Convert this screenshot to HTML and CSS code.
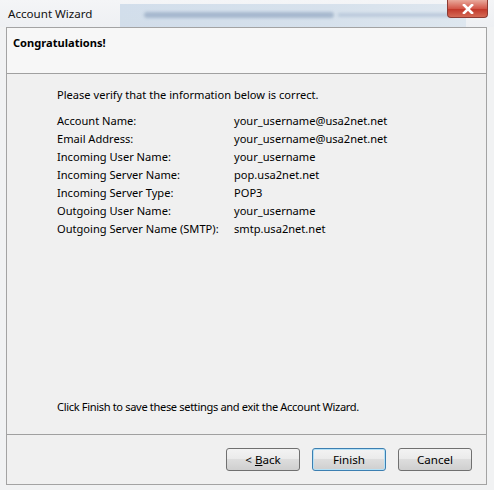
FILE: index.html
```html
<!DOCTYPE html>
<html lang="en">
  <head>
    <meta charset="UTF-8" />
    <title>Account Wizard</title>
    <link rel="stylesheet" href="styles.css">
  </head>
  <body>
    <div class="titlebar">
      <span class="title">Account Wizard</span>
      <div class="blur"></div>
      <div class="close">
        <svg width="16" height="10" viewBox="0 0 16 10">
          <path d="M4 1 L12 9 M12 1 L4 9" stroke="#fff" stroke-width="2.6" stroke-linecap="square" />
        </svg>
      </div>
    </div>
    <div class="frame">
      <div class="header">Congratulations!</div>
      <div class="content">
        <p class="intro">Please verify that the information below is correct.</p>
        <div class="row"><span class="label">Account Name:</span><span>your_username@usa2net.net</span></div>
        <div class="row"><span class="label">Email Address:</span><span>your_username@usa2net.net</span></div>
        <div class="row"><span class="label">Incoming User Name:</span><span>your_username</span></div>
        <div class="row"><span class="label">Incoming Server Name:</span><span>pop.usa2net.net</span></div>
        <div class="row"><span class="label">Incoming Server Type:</span><span>POP3</span></div>
        <div class="row"><span class="label">Outgoing User Name:</span><span>your_username</span></div>
        <div class="row"><span class="label">Outgoing Server Name (SMTP):</span><span>smtp.usa2net.net</span></div>
        <p class="outro">Click Finish to save these settings and exit the Account Wizard.</p>
      </div>
      <div class="footer">
        <button>&lt; <u>B</u>ack</button>
        <button class="default">Finish</button>
        <button>Cancel</button>
      </div>
    </div>
  </body>
</html>
```

FILE: styles.css
```css
* {
  box-sizing: border-box;
}
body {
  margin: 0;
  width: 494px;
  height: 490px;
  background: #f1f2f3;
  font-family: "Noto Sans", "Open Sans", sans-serif;
  font-size: 11.1px;
  color: #000;
}
.titlebar {
  position: relative;
  height: 27px;
  display: flex;
  align-items: center;
  padding-left: 8px;
  background: linear-gradient(#f4f5f7, #eef0f3);
}
.title {
  font-size: 11.6px;
  color: #111;
  margin-top: -1px;
}
.blur {
  position: absolute;
  left: 120px;
  right: 28px;
  top: 4px;
  height: 23px;
  background: linear-gradient(90deg, #cfdcea, #d4e0ec 60%, #dde6ef);
  opacity: 0.9;
}
.blur::before {
  content: "";
  position: absolute;
  left: 24px;
  top: 8px;
  width: 190px;
  height: 6px;
  border-radius: 3px;
  background: #9fb2ca;
  filter: blur(1.5px);
}
.blur::after {
  content: "";
  position: absolute;
  left: 218px;
  top: 9px;
  width: 115px;
  height: 4px;
  background: #b6c6d9;
  filter: blur(1.5px);
}
.close {
  position: absolute;
  left: 447px;
  top: 0;
  width: 41px;
  height: 18px;
  border: 1px solid #8d3a32;
  border-top: none;
  border-radius: 0 0 4px 4px;
  background: linear-gradient(#e9a99c, #d3584a 50%, #c2392b 55%, #d56a55);
  display: flex;
  align-items: center;
  justify-content: center;
}
.frame {
  margin: 0 7px 0 6px;
  border: 1px solid #a3a3a3;
  background: #f0f0f0;
}
.header {
  height: 46px;
  padding: 6px 0 0 6px;
  line-height: 18px;
  background: #f7f7f7;
  border-bottom: 1px solid #a0a0a0;
  font-weight: bold;
}
.content {
  height: 360px;
  padding: 12px 0 0 50px;
  line-height: 18px;
}
.intro {
  margin: 0 0 8px;
}
.row {
  display: flex;
}
.label {
  width: 177px;
  flex-shrink: 0;
}
.outro {
  margin: 160px 0 0;
  letter-spacing: -0.35px;
}
.footer {
  height: 50px;
  border-top: 1px solid #a0a0a0;
  display: flex;
  justify-content: flex-end;
  gap: 12px;
  padding: 13px 14px 0 0;
}
button {
  width: 74px;
  height: 23px;
  font-family: inherit;
  font-size: 11.6px;
  color: #000;
  border: 1px solid #707070;
  border-radius: 3px;
  background: linear-gradient(#f3f3f3, #ebebeb 45%, #dddddd 50%, #cfcfcf);
  padding: 0;
}
button.default {
  border-color: #3c7fb1;
  box-shadow: inset 0 0 0 1px #b5e1f6;
}
```
